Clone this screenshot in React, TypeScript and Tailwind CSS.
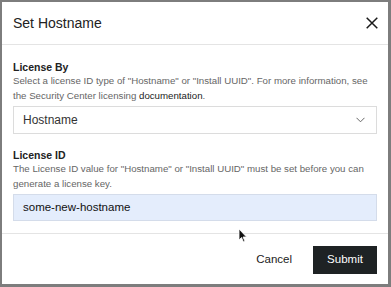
import React from "react";

export default function App() {
  return (
    <div
      className="w-[391px] h-[287px] bg-[#7d7d7d] pl-[2px] pt-[2px] pr-[3px] pb-[3px] relative"
      style={{ fontFamily: '"Liberation Sans", Arial, sans-serif' }}
    >
      <div className="w-full h-full bg-white flex flex-col">
        <div className="h-[43px] shrink-0 flex items-center justify-between pl-[11px] pr-[10px] border-b border-[#e4e4e4]">
          <span className="text-[14px] text-[#222]">Set Hostname</span>
          <svg width="12" height="12" viewBox="0 0 12 12">
            <path d="M0.7 0.7L11.3 11.3M11.3 0.7L0.7 11.3" stroke="#1a1a1a" strokeWidth="1.5" />
          </svg>
        </div>
        <div className="flex-1 px-[11px] pt-[15px]">
          <div className="text-[10.5px] font-bold text-[#222] leading-[14px]">License By</div>
          <div className="text-[9.7px] text-[#666] leading-[15px] -mt-[1px] whitespace-nowrap">
            <div>Select a license ID type of "Hostname" or "Install UUID". For more information, see</div>
            <div>
              the Security Center licensing <span className="text-[#222]">documentation</span>.
            </div>
          </div>
          <div className="mt-[3px] h-[28px] border border-[#dcdcdc] flex items-center justify-between pl-[9px] pr-[11px]">
            <span className="text-[12px] text-[#333]">Hostname</span>
            <svg width="9" height="6" viewBox="0 0 9 6">
              <path d="M0.5 0.8L4.5 4.8L8.5 0.8" stroke="#666" strokeWidth="1" fill="none" />
            </svg>
          </div>
          <div className="mt-[14px] text-[10.5px] font-bold text-[#222] leading-[14px]">License ID</div>
          <div className="text-[9.7px] text-[#666] leading-[15px] -mt-[1px] whitespace-nowrap">
            <div>The License ID value for "Hostname" or "Install UUID" must be set before you can</div>
            <div>generate a license key.</div>
          </div>
          <div className="mt-[3px] h-[27px] bg-[#e4edfc] border border-[#d4dcea] flex items-center pl-[9px]">
            <span className="text-[11.5px] text-[#111]">some-new-hostname</span>
          </div>
        </div>
        <div className="h-[51px] shrink-0 border-t border-[#e4e4e4] flex items-center justify-end pr-[11px] pt-[2px] gap-[21px]">
          <span className="text-[11.5px] text-[#222]">Cancel</span>
          <div className="w-[64px] h-[28px] bg-[#1e2224] flex items-center justify-center">
            <span className="text-[11.5px] text-white">Submit</span>
          </div>
        </div>
      </div>
      <svg className="absolute left-[238px] top-[228px]" width="10" height="15" viewBox="0 0 10 15">
        <path d="M1 1L1 12L3.5 9.5L5.5 14L7 13.3L5 9L8.5 9Z" fill="#111" stroke="#fff" strokeWidth="0.8" />
      </svg>
    </div>
  );
}
